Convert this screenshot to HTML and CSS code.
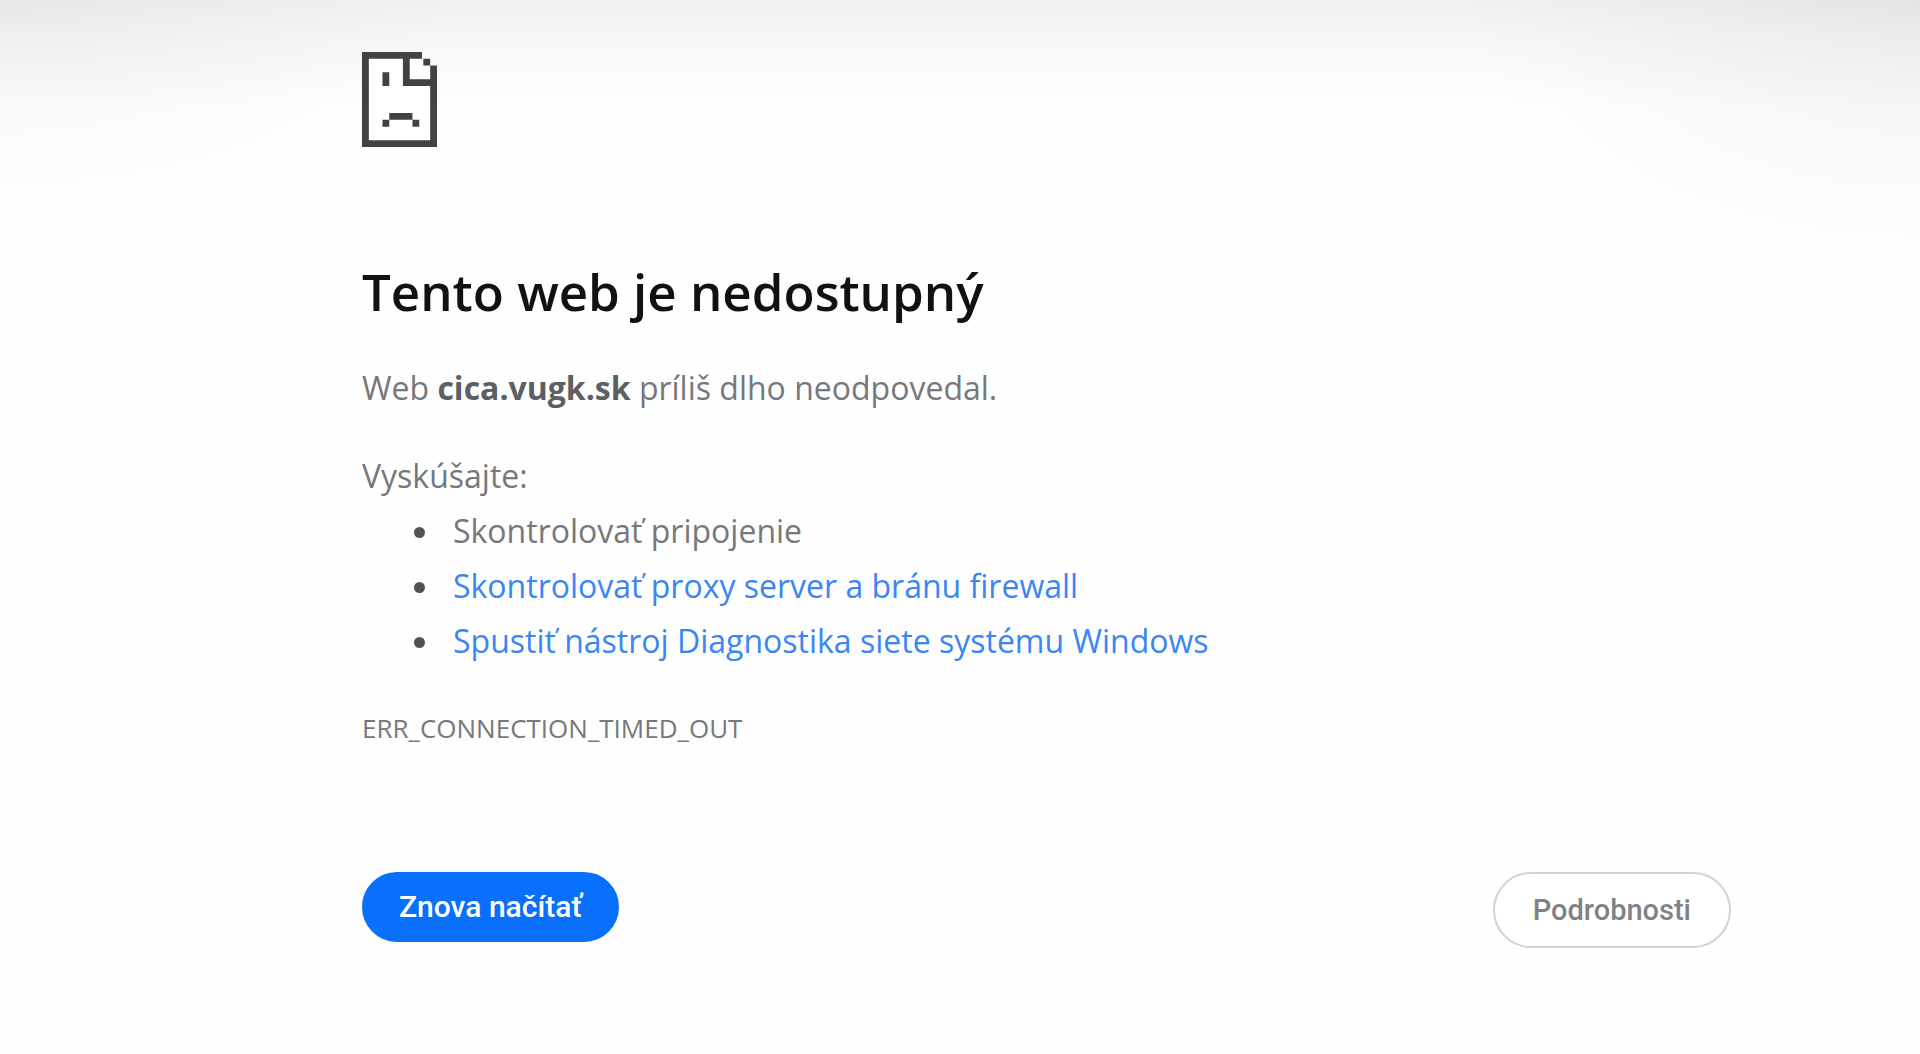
FILE: index.html
```html
<!DOCTYPE html>
<html lang="sk">
<head>
<meta charset="utf-8">
<meta name="viewport" content="width=device-width, initial-scale=1">
<title>cica.vugk.sk</title>
<link rel="stylesheet" href="styles.css">
</head>
<body>
<main class="error-page">
  <svg class="error-icon" viewBox="0 0 11 14" preserveAspectRatio="none" aria-hidden="true">
    <path class="paper" d="M.5 .5H9V2H10.5V13.5H.5Z"/>
    <path d="M0 0H8.8V1H7V4H10V2H11V14H0ZM1 1V13H10V5H6V1Z" fill-rule="evenodd"/>
    <path d="M9 1H10V2H9ZM3 3H4V5H3ZM4 9H7.4V10H4ZM3 10H4V11H3ZM7.4 10H8.4V11H7.4Z"/>
  </svg>
  <h1 class="title">Tento web je nedostupný</h1>
  <p class="summary">Web <strong>cica.vugk.sk</strong> príliš dlho neodpovedal.</p>
  <div class="suggestions">
    <p>Vyskúšajte:</p>
    <ul class="suggestion-list">
      <li>Skontrolovať pripojenie</li>
      <li><a href="#proxy">Skontrolovať proxy server a bránu firewall</a></li>
      <li><a href="#diagnostics">Spustiť nástroj Diagnostika siete systému Windows</a></li>
    </ul>
  </div>
  <p class="error-code">ERR_CONNECTION_TIMED_OUT</p>
  <div class="actions">
    <button class="button button-primary" type="button">Znova načítať</button>
    <button class="button button-secondary" type="button">Podrobnosti</button>
  </div>
</main>
</body>
</html>
```
FILE: styles.css
```css
* {
  box-sizing: border-box;
}

body {
  margin: 0;
  min-height: 100vh;
  color: #76787b;
  background:
    radial-gradient(ellipse 24% 220px at 0 0, rgba(0, 0, 0, 0.04), transparent),
    radial-gradient(ellipse 24% 270px at 100% 0, rgba(0, 0, 0, 0.05), transparent),
    linear-gradient(#f0f0f0, #f7f7f7 40px, #fefefe 110px);
  font-family: "Open Sans", "Noto Sans", sans-serif;
  font-size: 32px;
  line-height: 55px;
}

p,
h1,
ul {
  margin: 0;
}

.error-page {
  display: flex;
  flex-direction: column;
  padding: 52px 189px 48px 362px;
}

.error-icon {
  width: 75px;
  height: 95px;
  fill: #424242;
}

.error-icon .paper {
  fill: #fff;
}

.title {
  margin-top: 108px;
  color: #111;
  font-size: 51px;
  font-weight: 600;
  line-height: 72px;
}

.summary {
  margin-top: 33px;
}

.summary strong {
  color: #5c5f63;
}

.suggestions {
  margin-top: 33px;
}

.suggestion-list {
  padding-left: 81px;
}

.suggestion-list li {
  padding-left: 10px;
}

.suggestion-list li::marker {
  color: #505356;
}

.suggestion-list a {
  color: #3a86f2;
  text-decoration: none;
}

.error-code {
  margin-top: 33px;
  font-size: 26px;
}

.actions {
  display: flex;
  justify-content: space-between;
  align-items: flex-start;
  margin-top: 116px;
}

.button {
  border: 2px solid transparent;
  border-radius: 38px;
  font-family: Roboto, sans-serif;
  font-weight: 500;
  line-height: 34px;
}

.button-primary {
  padding: 16px 35px;
  color: #fff;
  background: #0870fa;
  background-clip: border-box;
  border-color: #0870fa;
  font-size: 30px;
}

.button-secondary {
  padding: 19px 38px;
  color: #808386;
  background: #fff;
  border-color: #d0d2d3;
  font-size: 29px;
}
```
